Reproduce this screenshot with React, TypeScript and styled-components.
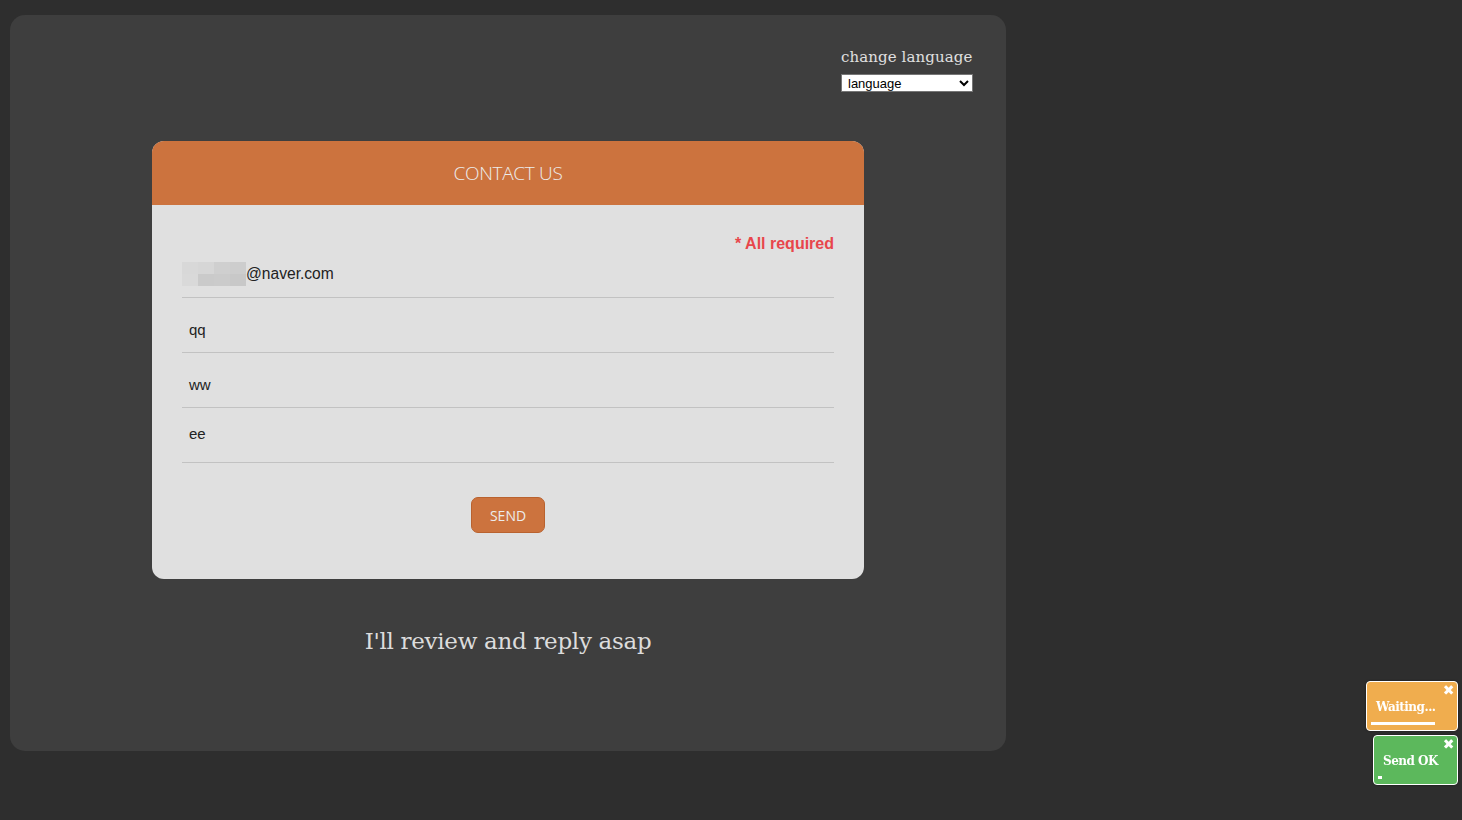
import React from "react";
import styled, { createGlobalStyle } from "styled-components";

const Global = createGlobalStyle`
  html, body { margin: 0; padding: 0; background: #2e2e2e; }
  body { width: 1462px; height: 820px; overflow: hidden; font-family: "Liberation Sans", Arial, sans-serif; }
`;

const Page = styled.div`
  padding: 15px 456px 0 10px;
  height: 820px;
  box-sizing: border-box;
`;

const Panel = styled.main`
  background: #3e3e3e;
  border-radius: 15px;
  height: 736px;
  box-sizing: border-box;
  padding: 33px 33px 0 142px;
  display: flex;
  flex-direction: column;
`;

const LangBox = styled.div`
  align-self: flex-end;
  display: flex;
  flex-direction: column;
  gap: 8px;
  width: 132px;
`;

const LangLabel = styled.label`
  font-family: "DejaVu Serif", "Liberation Serif", serif;
  color: #e0e0e0;
  font-size: 15px;
  letter-spacing: 0.1px;
  white-space: nowrap;
`;

const Select = styled.select`
  width: 132px;
  height: 18px;
  font-family: "Liberation Sans", Arial, sans-serif;
  font-size: 13px;
  padding: 0 0 0 2px;
  border: 1px solid #767676;
  border-radius: 0;
  background: #fff;
  color: #000;
`;

const Card = styled.section`
  margin-top: 49px;
  width: 712px;
  border-radius: 12px;
  overflow: hidden;
  background: #e0e0e0;
`;

const CardHeader = styled.header`
  height: 64px;
  background: #cc733e;
  color: #ececec;
  display: flex;
  align-items: center;
  justify-content: center;
  font-family: "Open Sans", sans-serif;
  font-weight: 300;
  font-size: 19px;
  letter-spacing: -0.3px;
`;

const CardBody = styled.form`
  padding: 29px 30px 46px;
  display: flex;
  flex-direction: column;
`;

const Required = styled.div`
  align-self: flex-end;
  color: #e8464b;
  font-weight: bold;
  font-size: 16px;
  line-height: 20px;
`;

const Field = styled.div<{ $h: number; $pad: number }>`
  height: ${(p) => p.$h}px;
  border-bottom: 1px solid #c2c2c2;
  box-sizing: border-box;
  display: flex;
  align-items: flex-start;
  padding-top: ${(p) => p.$pad}px;
  padding-left: 7px;
  font-size: 15px;
  color: #222;
`;

const EmailField = styled(Field)`
  padding-left: 0;
  font-size: 15.6px;
`;

const Blur = styled.span`
  display: grid;
  grid-template-columns: repeat(4, 16px);
  grid-template-rows: repeat(2, 12px);
`;

const Pix = styled.span<{ $c: string }>`
  background: ${(p) => p.$c};
`;

const FieldText = styled.span`
  line-height: 24px;
`;

const SendRow = styled.div`
  display: flex;
  justify-content: center;
  margin-top: 34px;
`;

const SendButton = styled.button`
  width: 74px;
  height: 36px;
  background: #cc733e;
  border: 1px solid #b9622f;
  border-radius: 7px;
  color: #ececec;
  font-family: "Open Sans", sans-serif;
  font-size: 14px;
  padding: 0;
`;

const Note = styled.p`
  width: 712px;
  text-align: center;
  margin: 49px 0 0;
  font-family: "DejaVu Serif", "Liberation Serif", serif;
  color: #dcdcdc;
  font-size: 23px;
  letter-spacing: -0.3px;
`;

const Toasts = styled.div`
  position: fixed;
  right: 4px;
  top: 681px;
  display: flex;
  flex-direction: column;
  align-items: flex-end;
  gap: 4px;
`;

const Toast = styled.div<{ $bg: string; $w: number }>`
  position: relative;
  width: ${(p) => p.$w}px;
  height: 50px;
  box-sizing: border-box;
  background: ${(p) => p.$bg};
  border: 1px solid #fff;
  border-radius: 4px;
  padding: 18px 6px 0 9px;
  color: #fff;
  font-family: "DejaVu Serif", serif;
  font-weight: bold;
  font-size: 12px;
  letter-spacing: -0.5px;
  box-shadow: 0 0 2px rgba(0, 0, 0, 0.5);
`;

const Close = styled.span`
  position: absolute;
  top: 0px;
  right: 3px;
  font-family: "DejaVu Sans", sans-serif;
  font-size: 14px;
  font-weight: bold;
  line-height: 16px;
`;

const Progress = styled.div<{ $w: number }>`
  position: absolute;
  left: 4px;
  bottom: 5px;
  height: 3px;
  width: ${(p) => p.$w}px;
  background: #fff;
`;

const blur = ["#d8d8d8", "#d6d6d6", "#cfcfcf", "#cdcdcd", "#d9d9d9", "#cacaca", "#cbcbcb", "#c8c8c8"];

export default function App() {
  return (
    <>
      <Global />
      <Page>
        <Panel>
          <LangBox>
            <LangLabel>change language</LangLabel>
            <Select defaultValue="language">
              <option value="language">language</option>
            </Select>
          </LangBox>
          <Card>
            <CardHeader>CONTACT US</CardHeader>
            <CardBody>
              <Required>* All required</Required>
              <EmailField $h={44} $pad={8}>
                <Blur>
                  {blur.map((c, i) => (
                    <Pix key={i} $c={c} />
                  ))}
                </Blur>
                <FieldText>@naver.com</FieldText>
              </EmailField>
              <Field $h={55} $pad={20}>
                <FieldText>qq</FieldText>
              </Field>
              <Field $h={55} $pad={20}>
                <FieldText>ww</FieldText>
              </Field>
              <Field $h={55} $pad={14}>
                <FieldText>ee</FieldText>
              </Field>
              <SendRow>
                <SendButton type="button">SEND</SendButton>
              </SendRow>
            </CardBody>
          </Card>
          <Note>I'll review and reply asap</Note>
        </Panel>
      </Page>
      <Toasts>
        <Toast $bg="#f0ad4e" $w={92}>
          Waiting...
          <Close>✖</Close>
          <Progress $w={64} />
        </Toast>
        <Toast $bg="#5cb85c" $w={85}>
          Send OK
          <Close>✖</Close>
          <Progress $w={4} />
        </Toast>
      </Toasts>
    </>
  );
}
